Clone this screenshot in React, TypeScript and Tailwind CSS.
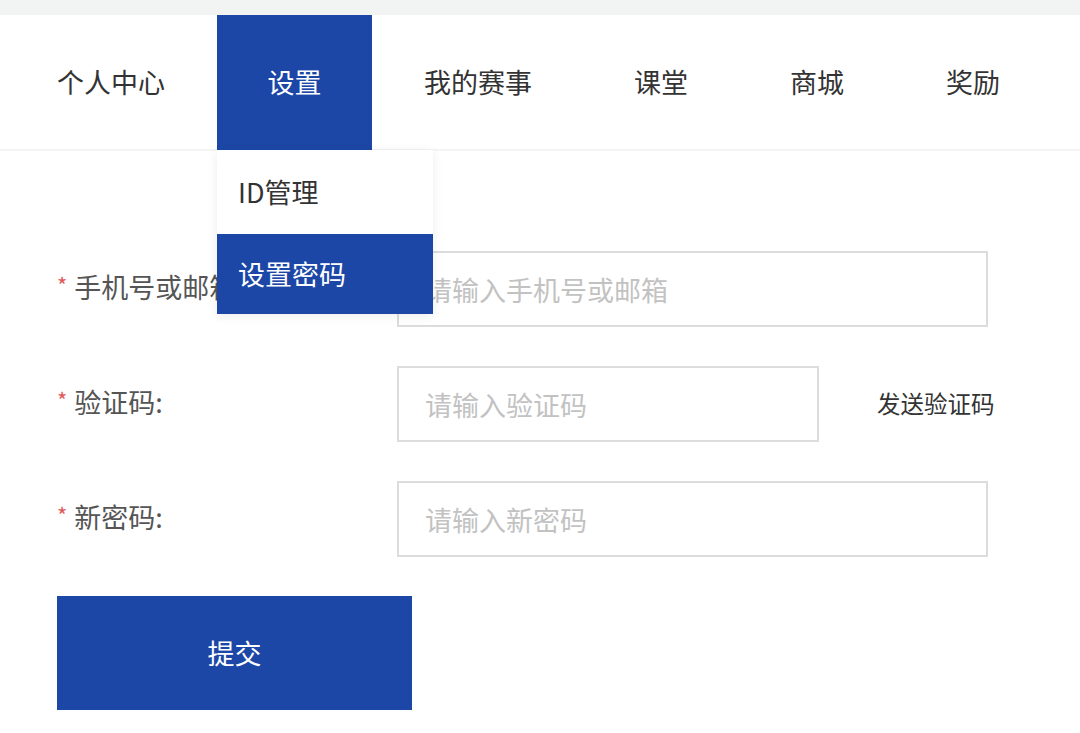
import React from 'react';

const navItems = ['个人中心', '设置', '我的赛事', '课堂', '商城', '奖励'];

const fields = [
  { label: '手机号或邮箱:', placeholder: '请输入手机号或邮箱', code: false },
  { label: '验证码:', placeholder: '请输入验证码', code: true },
  { label: '新密码:', placeholder: '请输入新密码', code: false },
];

const App: React.FC = () => {
  return (
    <div
      className="w-[1080px] h-[733px] bg-white overflow-hidden text-[#333]"
      style={{ fontFamily: '"Noto Sans CJK SC", "Noto Sans", sans-serif' }}
    >
      <div className="h-[15px] bg-[#f2f3f3]" />

      {/* nav */}
      <nav className="relative z-10 flex gap-[2px] pl-[7px] h-[136px] border-b-2 border-[#f3f4f6]">
        {navItems.map((item) =>
          item === '设置' ? (
            <div key={item} className="relative">
              <div className="h-[135px] w-[155px] flex items-center justify-center bg-[#1c47a6] text-white text-[27px]">
                {item}
              </div>
              <div className="absolute left-0 top-[135px] w-[216px] bg-white shadow-[0_2px_10px_rgba(0,0,0,0.08)]">
                <div className="h-[84px] pl-[21px] flex items-center text-[27px] text-[#333]">ID管理</div>
                <div className="h-[80px] pl-[21px] flex items-center text-[27px] text-white bg-[#1c47a6]">设置密码</div>
              </div>
            </div>
          ) : (
            <div key={item} className="h-[135px] px-[50px] flex items-center text-[27px]">
              {item}
            </div>
          ),
        )}
      </nav>

      {/* form */}
      <form className="pl-[57px] pt-[100px] flex flex-col gap-[39px]">
        {fields.map((f) => (
          <div key={f.label} className="flex items-center">
            <label className="w-[340px] flex items-center text-[27px] text-[#555] -mt-[4px]">
              <span className="text-[#e05a5a] text-[22px] mr-[7px] -mt-[6px]">*</span>
              {f.label}
            </label>
            <input
              placeholder={f.placeholder}
              className={`${f.code ? 'w-[422px]' : 'w-[591px]'} h-[76px] border-2 border-[#dcdcdc] px-[26px] text-[27px] outline-none placeholder:text-[#c2c2c2]`}
            />
            {f.code && <span className="ml-[58px] text-[23.5px] text-[#333]">发送验证码</span>}
          </div>
        ))}
        <button
          type="button"
          className="w-[355px] h-[114px] bg-[#1c47a6] text-white text-[27px]"
        >
          提交
        </button>
      </form>
    </div>
  );
};

export default App;
